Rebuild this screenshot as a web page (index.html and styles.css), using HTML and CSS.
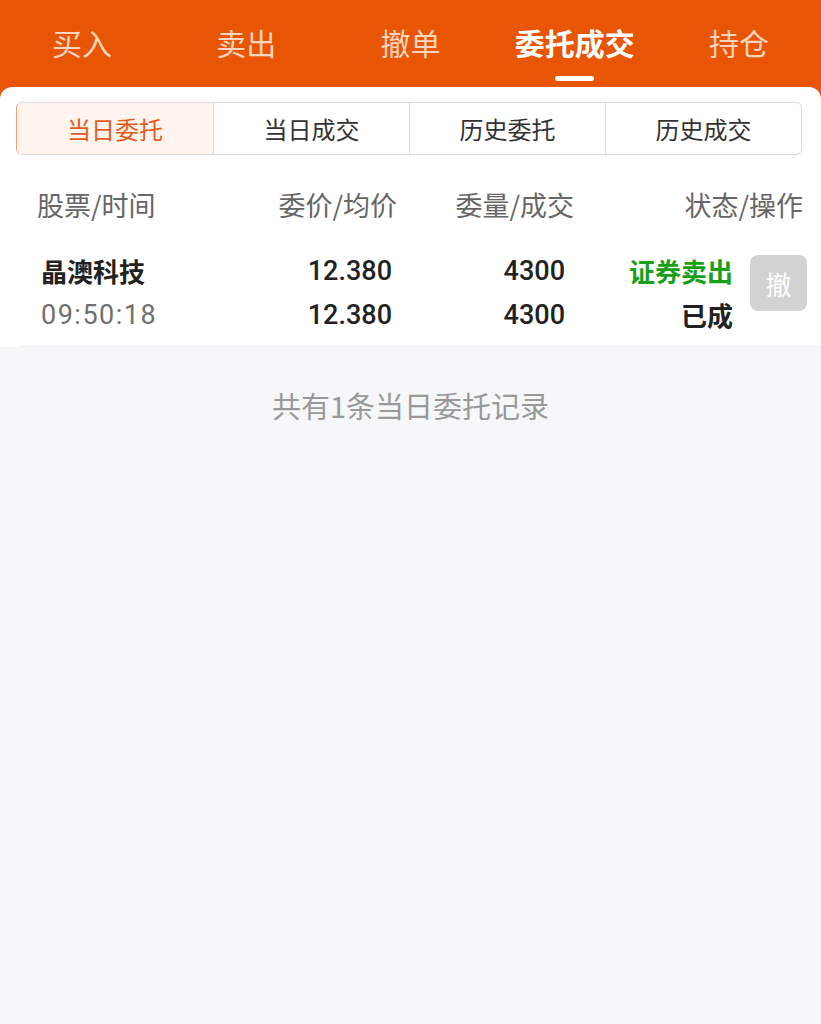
FILE: index.html
```html
<!DOCTYPE html>
<html>
<head>
  <meta charset="UTF-8">
  <title>委托成交</title>
  <link rel="stylesheet" href="styles.css">
</head>
<body>
  <div class="top">
    <div class="tabs">
      <div class="tab">买入</div>
      <div class="tab">卖出</div>
      <div class="tab">撤单</div>
      <div class="tab active">委托成交<span class="bar"></span></div>
      <div class="tab">持仓</div>
    </div>

    <div class="card">
      <div class="seg">
        <div class="seg-item on">当日委托</div>
        <div class="seg-item">当日成交</div>
        <div class="seg-item">历史委托</div>
        <div class="seg-item">历史成交</div>
      </div>

      <div class="head-row">
        <div>股票/时间</div>
        <div class="r">委价/均价</div>
        <div class="r">委量/成交</div>
        <div class="r">状态/操作</div>
      </div>

      <div class="data-row">
        <div class="cell">
          <div class="name">晶澳科技</div>
          <div class="time">09:50:18</div>
        </div>
        <div class="cell r num">
          <div>12.380</div>
          <div>12.380</div>
        </div>
        <div class="cell r num">
          <div>4300</div>
          <div>4300</div>
        </div>
        <div class="cell r state">
          <div class="sell">证券卖出</div>
          <div>已成</div>
        </div>
        <button class="cancel">撤</button>
      </div>
    </div>
  </div>

  <div class="summary">共有1条当日委托记录</div>
</body>
</html>
```

FILE: styles.css
```css
body { margin: 0; background: #f5f7f8; font-family: "Noto Sans CJK SC", "Liberation Sans", sans-serif; color: #222; }

.top { background: #e85504; }
.tabs { display: grid; grid-template-columns: repeat(5, 1fr); height: 87px; }
.tab { display: flex; flex-direction: column; align-items: center; padding-top: 16px; font-size: 30px; line-height: 52px; color: #fbd5bf; }
.tab.active { color: #fff; font-weight: 700; }
.tab .bar { display: block; width: 39px; height: 5px; margin-top: 8px; background: #fff; border-radius: 3px; }

.card { background: #fff; border-radius: 12px 12px 0 0; padding-top: 15px; }

.seg { display: grid; grid-template-columns: repeat(4, 1fr); margin: 0 19px 0 16px; height: 53px; border: 1px solid #dcdcdc; border-left-color: #eba07a; border-radius: 6px; overflow: hidden; box-sizing: border-box; }
.seg-item { display: flex; align-items: center; justify-content: center; font-size: 24px; color: #333; border-left: 1px solid #dcdcdc; }
.seg-item:first-child { border-left: 0; }
.seg-item.on { background: #fff4ee; color: #e25c1c; }

.head-row { display: grid; grid-template-columns: 1fr 160px 177px 229px; margin-top: 20px; height: 60px; line-height: 60px; padding: 0 18px 0 37px; font-size: 27px; color: #666; }
.r { text-align: right; }

.data-row { display: grid; grid-template-columns: 1fr 160px 173px 185px 57px; margin-left: 20px; padding: 14px 14px 9px 21px; border-bottom: 1px solid #eef0f1; line-height: 44px; font-size: 26px; }
.name { font-weight: 600; color: #222; }
.time { font-family: Roboto, "Liberation Sans", sans-serif; font-size: 27px; color: #707070; letter-spacing: 1.5px; }
.num { font-family: Roboto, "Liberation Sans", sans-serif; font-size: 27px; font-weight: 500; color: #222; }
.state { font-weight: 600; color: #222; padding-right: 17px; }
.sell { color: #19a019; }
.cancel { grid-column: 5; align-self: start; margin-top: 6px; width: 57px; height: 56px; border: 0; border-radius: 8px; background: #d3d3d3; color: #fff; font-family: "Noto Sans CJK SC", sans-serif; font-size: 26px; padding: 0; }

.summary { margin-top: 38px; text-align: center; font-size: 29px; line-height: 40px; color: #999; }
```
